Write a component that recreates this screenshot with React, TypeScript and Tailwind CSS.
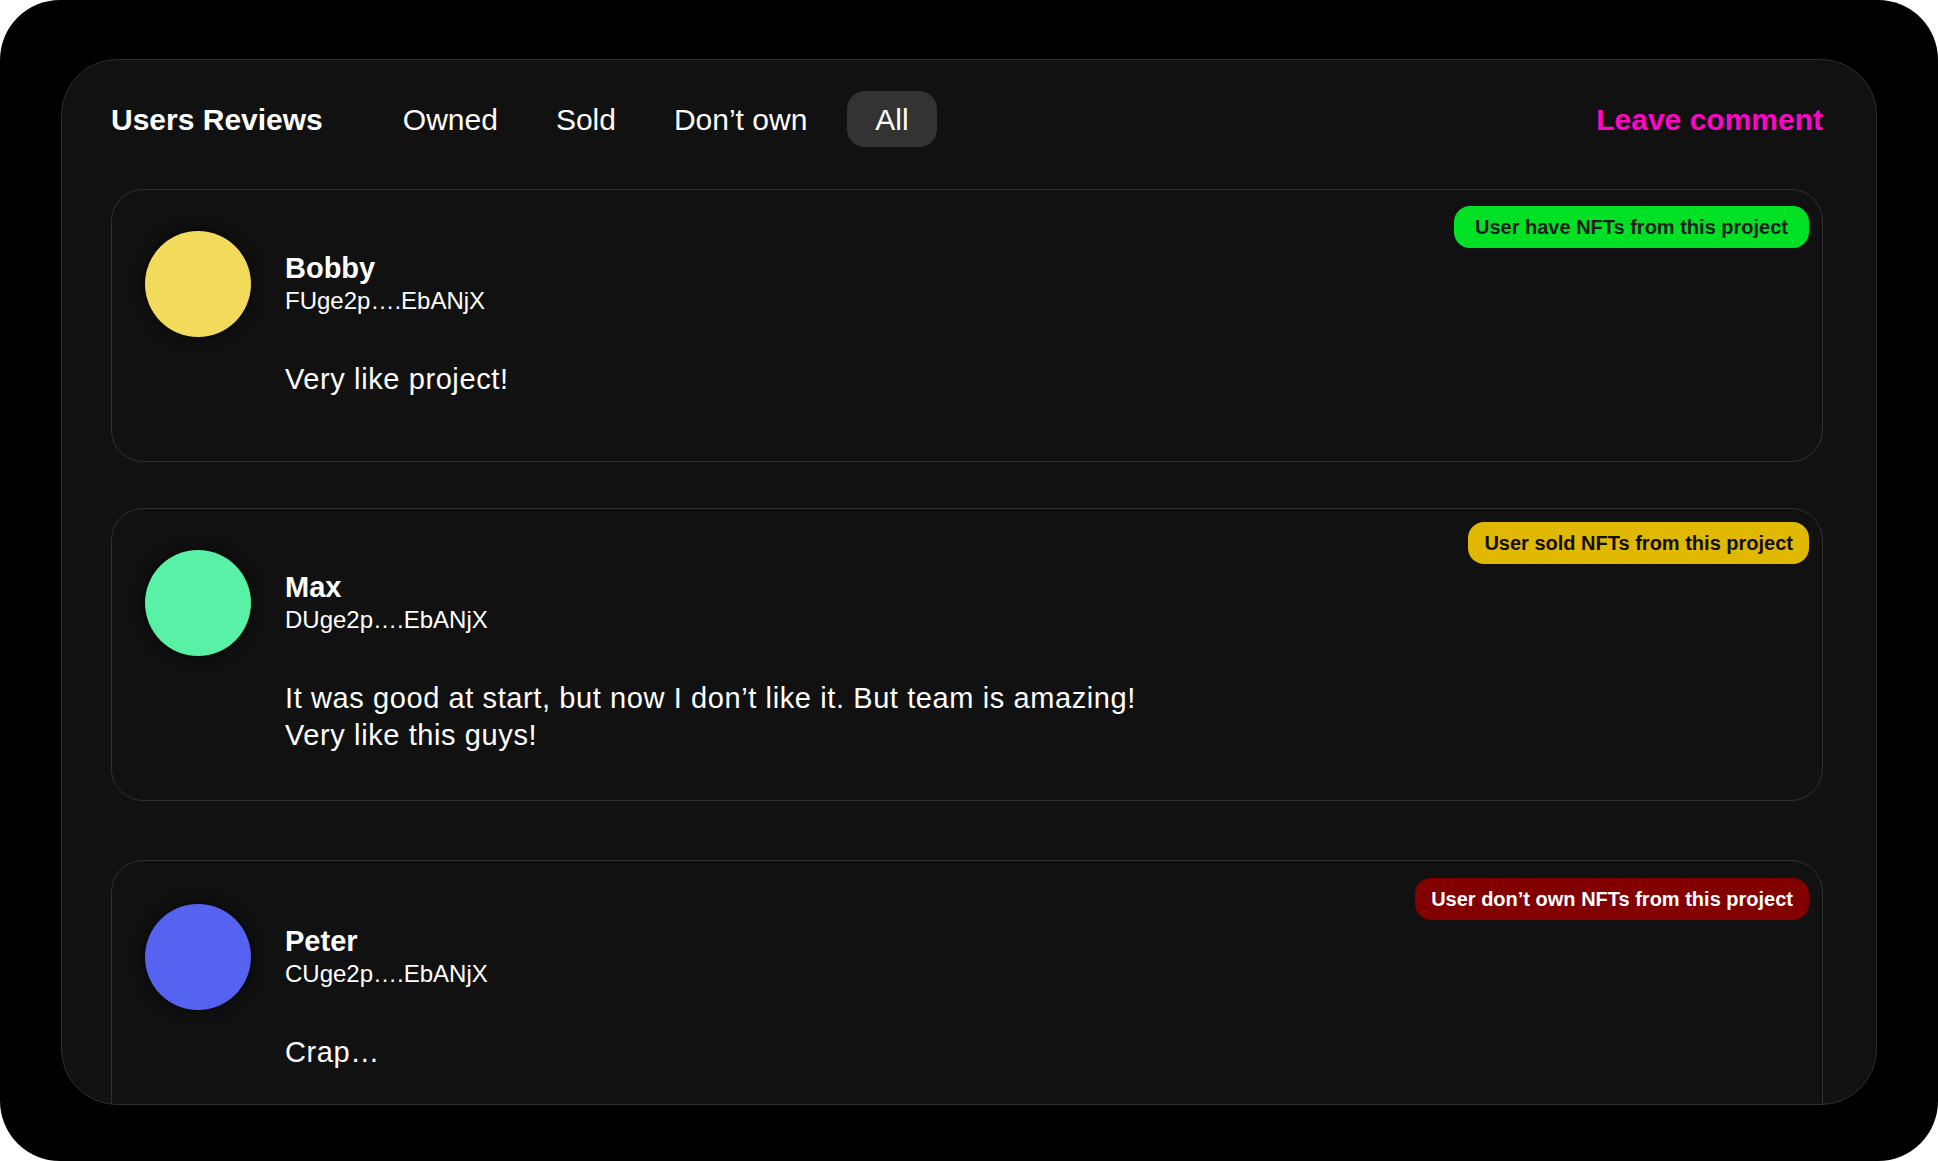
import React from "react";

type Review = {
  name: string;
  address: string;
  lines: string[];
  avatar: string;
  badge: string;
  badgeClass: string;
  cardClass: string;
};

const reviews: Review[] = [
  {
    name: "Bobby",
    address: "FUge2p….EbANjX",
    lines: ["Very like project!"],
    avatar: "bg-[#f2da5a]",
    badge: "User have NFTs from this project",
    badgeClass: "bg-[#00e126] text-[#1c1c1c] top-[16px] px-[21px]",
    cardClass: "h-[273px]",
  },
  {
    name: "Max",
    address: "DUge2p….EbANjX",
    lines: [
      "It was good at start, but now I don’t like it. But team is amazing!",
      "Very like this guys!",
    ],
    avatar: "bg-[#58f1a5]",
    badge: "User sold NFTs from this project",
    badgeClass: "bg-[#e0b800] text-[#0f0f0f] top-[13px] px-[16px]",
    cardClass: "h-[293px] mt-[46px]",
  },
  {
    name: "Peter",
    address: "CUge2p….EbANjX",
    lines: ["Crap…"],
    avatar: "bg-[#5662f0]",
    badge: "User don’t own NFTs from this project",
    badgeClass: "bg-[#820000] text-white top-[17px] px-[16px]",
    cardClass: "h-[293px] mt-[59px] pt-[2px]",
  },
];

const tabs = ["Owned", "Sold", "Don’t own"];

function ReviewCard({ review }: { review: Review }) {
  return (
    <div
      className={`relative shrink-0 flex border border-[#313131] rounded-[32px] bg-[#111111] pl-[33px] ${review.cardClass}`}
    >
      <div
        className={`mt-[41px] w-[106px] h-[106px] shrink-0 rounded-full shadow-[0_0_14px_rgba(0,0,0,0.7)] ${review.avatar}`}
      />
      <div className="ml-[34px] mt-[61px] flex flex-col text-white">
        <div className="text-[29px] leading-[34px] font-bold">{review.name}</div>
        <div className="mt-[2px] text-[24px] leading-[28px]">{review.address}</div>
        <div className="mt-[46px] text-[29px] leading-[37px] tracking-[0.6px]">
          {review.lines.map((line) => (
            <div key={line}>{line}</div>
          ))}
        </div>
      </div>
      <div
        className={`absolute right-[13px] h-[42px] rounded-[16px] text-[20px] leading-[42px] font-bold whitespace-nowrap ${review.badgeClass}`}
      >
        {review.badge}
      </div>
    </div>
  );
}

export default function App() {
  return (
    <div className="w-full bg-white [font-family:'Liberation_Sans',Arial,sans-serif]">
      <div className="w-full h-[1161px] bg-black rounded-[60px] px-[61px] pt-[59px]">
        <div className="h-[1046px] flex flex-col overflow-hidden rounded-[56px] border border-[#2f2f2f] bg-[#111111] pl-[49px] pr-[53px] pt-[31px]">
          <div className="flex items-center h-[56px] shrink-0">
            <h1 className="text-[30px] font-bold text-white">Users Reviews</h1>
            <div className="ml-[52px] flex items-center gap-[2px]">
              {tabs.map((tab) => (
                <button
                  key={tab}
                  className="h-[56px] px-[28px] rounded-[18px] text-[30px] text-white"
                >
                  {tab}
                </button>
              ))}
              <button className="ml-[10px] h-[56px] px-[28px] rounded-[18px] bg-[#333333] text-[30px] text-white">
                All
              </button>
            </div>
            <button className="ml-auto text-[30px] font-bold text-[#ff05c6]">
              Leave comment
            </button>
          </div>

          <div className="mt-[42px] flex flex-col">
            {reviews.map((review) => (
              <ReviewCard key={review.name} review={review} />
            ))}
          </div>
        </div>
      </div>
    </div>
  );
}
